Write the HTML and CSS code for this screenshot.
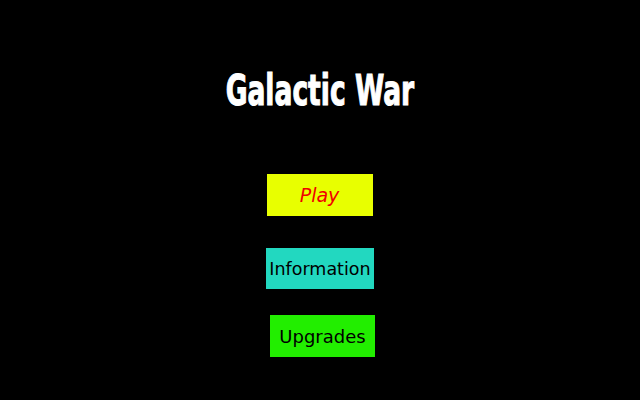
FILE: index.html
```html
<!DOCTYPE html>
<html lang="en">
<head>
<meta charset="UTF-8" />
<title>Galactic War</title>
<link rel="stylesheet" href="styles.css">
</head>
<body>
<div class="menu">
  <h1 class="title">Galactic War</h1>
  <button class="btn btn-play">Play</button>
  <button class="btn btn-info">Information</button>
  <button class="btn btn-upgrades">Upgrades</button>
</div>
</body>
</html>
```

FILE: styles.css
```css
body {
  margin: 0;
  background: #000;
  width: 640px;
  height: 400px;
  overflow: hidden;
}

.menu {
  display: flex;
  flex-direction: column;
  align-items: center;
  padding-top: 68px;
}

/* no Impact available: squeeze a bold condensed face */
.title {
  margin: 0 0 60px;
  font-family: "DejaVu Sans Condensed", "DejaVu Sans", sans-serif;
  font-weight: 700;
  font-size: 41px;
  line-height: 46px;
  color: #fff;
  transform: scale(0.72, 1.02);
  -webkit-text-stroke: 1px #fff;
}

.btn {
  border: none;
  padding: 0;
  height: 42px;
  font-family: "DejaVu Sans", sans-serif;
  font-size: 17px;
  color: #000;
}

.btn-play {
  width: 106px;
  background: #e8ff00;
  color: #f00000;
  font-style: italic;
  font-size: 19px;
  margin-right: 1px;
}

.btn-info {
  width: 108px;
  height: 41px;
  margin-top: 32px;
  background: #22d8c0;
  font-size: 17.5px;
}

.btn-upgrades {
  width: 105px;
  margin-top: 26px;
  margin-left: 5px;
  background: #22ee00;
  font-size: 18px;
}
```
